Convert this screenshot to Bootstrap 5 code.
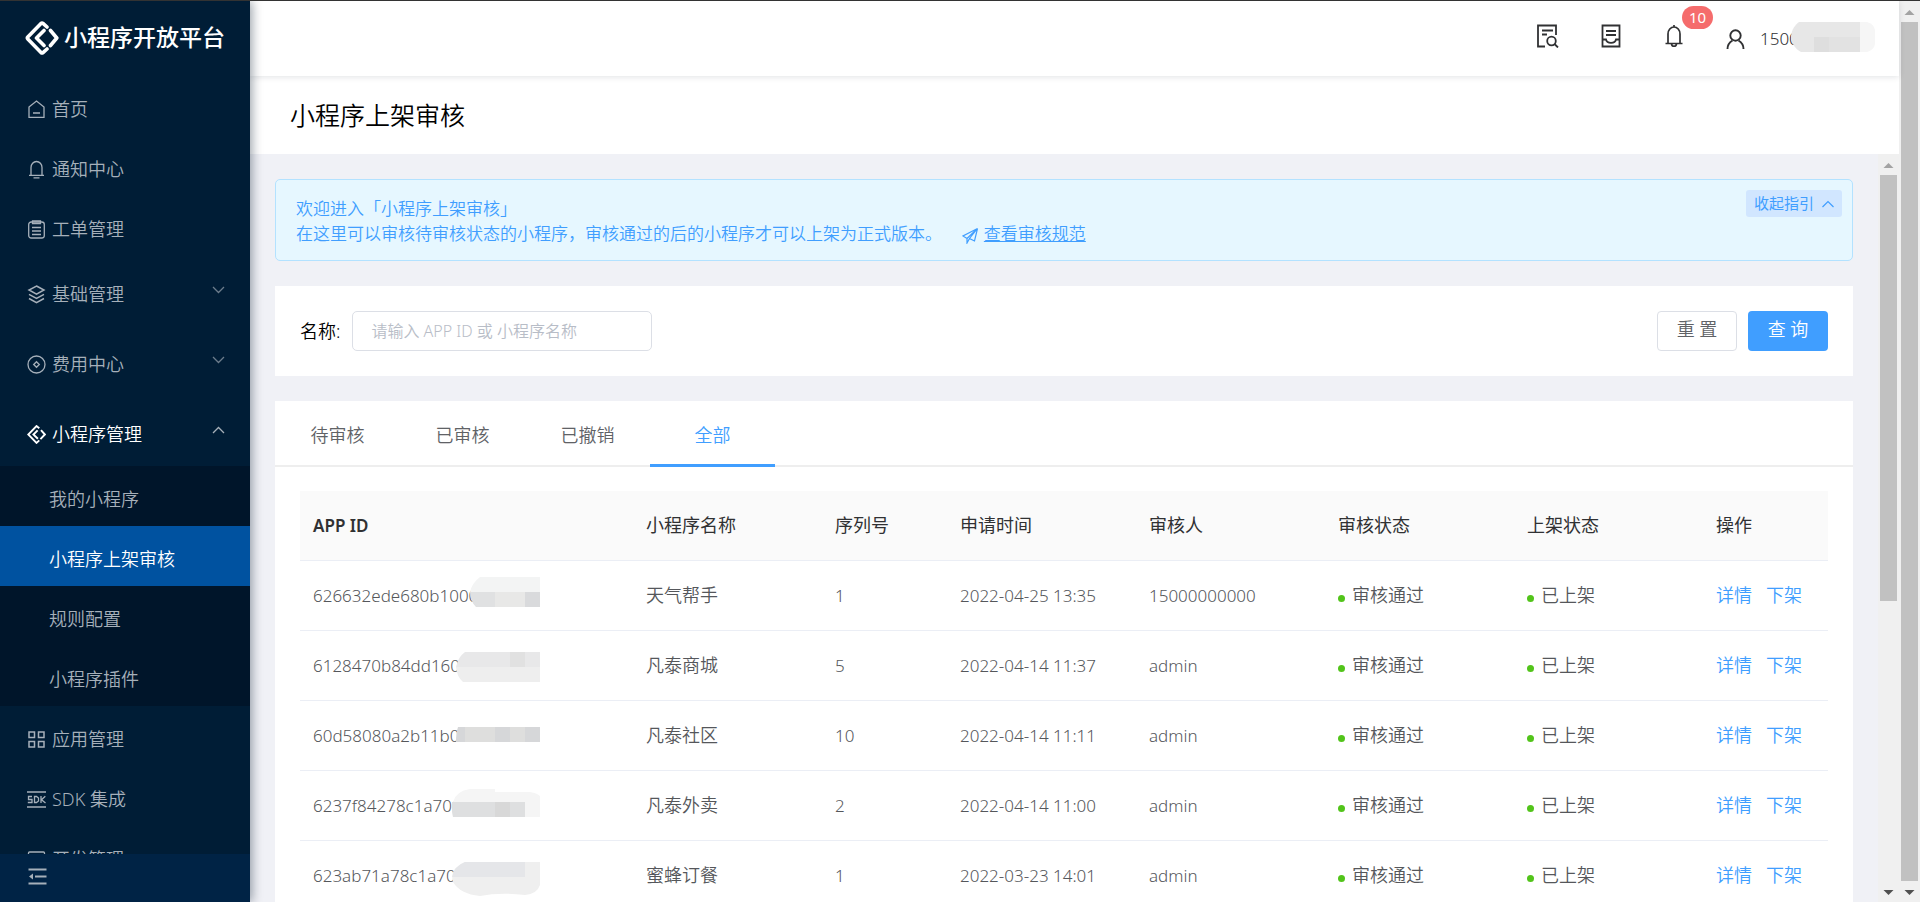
<!DOCTYPE html>
<html lang="zh-CN">
<head>
<meta charset="utf-8">
<meta name="viewport" content="width=device-width, initial-scale=1">
<title>小程序上架审核</title>
<link href="https://cdn.jsdelivr.net/npm/bootstrap@5.3.0/dist/css/bootstrap.min.css" rel="stylesheet">
<style>
:root { --brand: #409eff; --rail: #f0f0f0; }
body { font: 350 17px/25px "Noto Sans", "Noto Sans CJK SC", sans-serif; color: #000; background: #f0f1f6; }
.app { height: 100vh; border-top: 1px solid #333; overflow: hidden; }
a { text-decoration: none; }
svg { flex: none; fill: none; stroke: currentColor; }
.shrinkable { min-width: 0; min-height: 0; }

/* sidebar */
.side { width: 250px; background: #001d36; color: #adb5bd; box-shadow: 2px 0 10px rgba(0,21,41,.4); z-index: 2; }
.brand { height: 78px; padding: 0 0 2px 25px; gap: 5px; color: #fff; font-size: 23px; font-weight: 500; }
.side-nav { overflow: hidden; min-height: 0; font-size: 18px; }
.side-link { height: 60px; padding: 6px 25px 0 27px; gap: 6px; color: #a6b0ba; flex: none; }
.side-link.group { height: 70px; }
.side-link.open { color: #fff; }
.side-link .arrow { margin: 0 0 8px auto; opacity: .65; }
.sub { background: #00152a; }
.sub .side-link { padding-left: 49px; }
.sub .side-link.current { background: #0052a0; color: #fff; }
.collapse-bar { height: 48px; padding: 0 0 3px 28px; background: #002345; border: 0; color: #a6b0ba; flex: none; }

/* header */
.topbar { height: 75px; padding: 0 24px 7px 0; background: #fff; box-shadow: 0 1px 6px rgba(0,21,41,.12); z-index: 1; color: #303133; }
.tool { width: 63px; color: #303133; background: none; border: 0; padding: 0; position: relative; }
.count { position: absolute; left: 40px; top: -16px; width: 31px; height: 23px; border-radius: 12px; background: #f56c6c; color: #fff; font-size: 15px; line-height: 23px; }
.account { gap: 15px; color: #303133; padding: 7px 0 0 21px; }
.account-name { position: relative; width: 115px; }
.account-name svg { position: absolute; left: 31px; top: -4px; stroke: none; }
.page-title { height: 78px; padding-left: 40px; background: #fff; font-size: 25px; font-weight: 350; }

/* content */
.content { padding: 25px 25px 0; gap: 25px; overflow: hidden; }
.guide { border: 1px solid #b3e2ff; border-radius: 5px; background: #e6f7ff; color: var(--brand); padding: 10px 10px 14px 20px; }
.guide-text { padding-top: 6px; }
.guide a { color: var(--brand); text-decoration: underline; }
.guide-toggle { background: #d1e6ff; color: var(--brand); border: 0; border-radius: 3px; height: 27px; padding: 0 8px; font-size: 15px; line-height: 27px; gap: 8px; }
.panel { background: #fff; }
.search { padding: 25px; font-size: 18px; }
.search label { margin-right: 12px; }
.search .form-control { width: 300px; height: 40px; border-color: #dcdfe6; border-radius: 5px; padding: 0 18px; font-size: 16px; font-weight: 350; }
.search .form-control::placeholder { color: #b8bdc7; }
.search .btn { width: 80px; height: 40px; padding: 0 0 3px; border-radius: 4px; font-size: 18px; font-weight: 350; line-height: 25px; }
.btn-reset { border-color: #dcdfe6; color: #606266; }
.search .btn-query { background: var(--brand); color: #fff; margin-left: 11px; }
.tabs { border-bottom: 2px solid #eee; height: 66px; font-size: 18px; }
.tab { width: 125px; height: 66px; border: 0; border-bottom: 3px solid transparent; background: none; color: #606266; padding: 5px 0 0; font-weight: 350; }
.tab.active { color: var(--brand); border-color: var(--brand); }
.list { padding: 24px 25px 0; }
.grid-table { width: 100%; table-layout: fixed; border-collapse: separate; border-spacing: 0; color: #55575b; }
.grid-table th, .grid-table td { height: 70px; padding: 0 0 0 13px; border-bottom: 1px solid #ebeef5; white-space: nowrap; }
.grid-table th { background: #fafafa; color: #303133; font-weight: 400; font-size: 18px; }
.grid-table th.latin { font-weight: 600; font-size: 17px; }
.w-std { width: 189px; } .w-slim { width: 125px; }
.zh { font-size: 18px; }
.masked { position: relative; }
.masked svg { position: absolute; left: 152px; top: 0; stroke: none; }
.dot { width: 7px; height: 7px; border-radius: 50%; background: #52c41a; display: inline-block; margin-right: 7px; }
.grid-table a { color: var(--brand); margin-right: 14px; }
.grid-table a + a { margin: 0; }

/* scroll rails */
.rail { width: 21px; background: var(--rail); padding: 0 2px 0 2px; flex: none; }
.rail .thumb { background: #c1c1c1; width: 17px; }
.rail svg { stroke: none; height: 21px; width: 17px; }
</style>
</head>
<body>
<div class="app d-flex">
  <aside class="side d-flex flex-column flex-shrink-0">
    <div class="brand d-flex align-items-center">
      <svg width="34" height="34" viewBox="0 0 34 34" stroke-width="3.6" stroke-linejoin="round" stroke-linecap="round"><path d="M22 6 18 2.4Q17 1.600 16 2.400L2.800 16Q1.900 17 2.800 18L16 31.600Q17 32.400 18 31.600L22 28M25.500 9.500l6.300 7.500-6.300 7.500M19 9.500 11.500 17l7.500 7.500"/></svg>
      <span>小程序开放平台</span>
    </div>
    <nav class="side-nav d-flex flex-column flex-grow-1">
      <a href="#" class="side-link d-flex align-items-center"><svg width="19" height="19" viewBox="0 0 19 19" stroke-width="1.3"><path d="M2 7 9.500 1 17 7v10.300H2zM6 13h7"/></svg>首页</a>
      <a href="#" class="side-link d-flex align-items-center"><svg width="19" height="19" viewBox="0 0 19 19" stroke-width="1.3"><path d="M4 15V7.500a5.500 6 0 0 1 11 0V15M2 15.300h15M6.500 17.800h6"/></svg>通知中心</a>
      <a href="#" class="side-link d-flex align-items-center"><svg width="19" height="19" viewBox="0 0 19 19" stroke-width="1.3"><rect x="1.700" y="2" width="15.600" height="16" rx="2.500"/><path d="M5.500 1h8v2.500h-8zM5 7.500h9M5 11h9M5 14.500h9"/></svg>工单管理</a>
      <a href="#" class="side-link group d-flex align-items-center"><svg width="19" height="19" viewBox="0 0 19 19" stroke-width="1.5"><path d="m9.500 1 7.500 4-7.500 4.200L2 5zM2 9.300l7.500 4.200L17 9.300M2 13.500l7.500 4.200 7.500-4.200"/></svg>基础管理<svg class="arrow" width="13" height="8" viewBox="0 0 13 8" stroke-width="1.300"><path d="m1 1 5.500 5.500L12 1"/></svg></a>
      <a href="#" class="side-link group d-flex align-items-center"><svg width="19" height="19" viewBox="0 0 19 19" stroke-width="1.3"><circle cx="9.500" cy="9.500" r="8.500"/><path d="m9.500 6.700 2.800 2.800-2.800 2.800-2.800-2.800z"/></svg>费用中心<svg class="arrow" width="13" height="8" viewBox="0 0 13 8" stroke-width="1.300"><path d="m1 1 5.500 5.500L12 1"/></svg></a>
      <a href="#" class="side-link group open d-flex align-items-center"><svg width="19" height="19" viewBox="0 0 34 34" stroke-width="3.4"><path d="M22 6 17 1.900 2.200 17 17 32l5-4.500M25 9l7 8-8 8.400M19 9.500 11.500 17l8 7.500"/></svg>小程序管理<svg class="arrow" width="13" height="8" viewBox="0 0 13 8" stroke-width="1.300"><path d="m1 7 5.500-5.500L12 7"/></svg></a>
      <div class="sub flex-shrink-0">
        <a href="#" class="side-link d-flex align-items-center">我的小程序</a>
        <a href="#" class="side-link current d-flex align-items-center" aria-current="page">小程序上架审核</a>
        <a href="#" class="side-link d-flex align-items-center">规则配置</a>
        <a href="#" class="side-link d-flex align-items-center">小程序插件</a>
      </div>
      <a href="#" class="side-link d-flex align-items-center"><svg width="19" height="19" viewBox="0 0 19 19" stroke-width="1.500"><path d="M2 2h5.500v5.500H2zM11.500 2H17v5.500h-5.500zM2 11.500h5.500V17H2zM11.500 11.500H17V17h-5.500z"/></svg>应用管理</a>
      <a href="#" class="side-link d-flex align-items-center"><svg width="19" height="19" viewBox="0 0 19 19" stroke-width="1.300"><path d="M0 2h19M0 17h19"/><path d="M5 6.500H1.500v3H5v3H.800M7.500 6.500v6h2l2-1.500V8l-2-1.500zM14 6v7M18.300 6.200 14.500 9.700l4 3.300"/></svg>SDK 集成</a>
      <a href="#" class="side-link d-flex align-items-center"><svg width="19" height="19" viewBox="0 0 19 19" stroke-width="1.300"><rect x="1.500" y="2" width="16" height="14" rx="1"/></svg>开发管理</a>
    </nav>
    <button type="button" class="collapse-bar d-flex align-items-center" aria-label="收起菜单"><svg width="19" height="17" viewBox="0 0 19 17" stroke-width="2.200"><path d="M.500 1.500h18M7 8.500h11.500M.500 15.500h18"/><path d="M5 5.500v6l-4-3z" fill="currentColor" stroke="none"/></svg></button>
  </aside>

  <div class="shrinkable d-flex flex-column flex-grow-1">
    <header class="topbar d-flex align-items-center justify-content-end flex-shrink-0">
      <button type="button" class="tool" aria-label="查阅"><svg width="23" height="24" viewBox="0 0 23 24" stroke-width="1.800"><path d="M9 22.500H2V1.500h18V11M6 6.500h11M6 10.500h5"/><circle cx="15.500" cy="17" r="4.300"/><path d="m18.500 20 3.500 3.500"/></svg></button>
      <button type="button" class="tool" aria-label="文档"><svg width="20" height="24" viewBox="0 0 20 24" stroke-width="1.800"><path d="M1.500 1.500h17v21h-17zM5 7h10M5 11h10M1.500 15.500H5c1 4.500 9 4.500 10 0h3.500"/></svg></button>
      <button type="button" class="tool" aria-label="通知"><svg width="20" height="24" viewBox="0 0 20 24" stroke-width="1.700"><path d="M4 19V10a6 7 0 0 1 12 0v9M1.500 19.500h17M10 1v2.500M7.500 20c.500 3 4.500 3 5 0"/></svg><span class="count">10</span></button>
      <a href="#" class="account d-flex align-items-center"><svg width="19" height="20" viewBox="0 0 19 20" stroke-width="1.900"><circle cx="9.500" cy="6.500" r="5.200"/><path d="M1.500 20c0-4 2.500-7 5-8.500M17.500 20c0-4-2.500-7-5-8.500"/></svg>
        <span class="account-name">1500<svg width="84" height="30" viewBox="0 0 84 30"><path fill="#e7e7e7" d="M8 0h62v30H10C3 26 0 20 0 14 1 7 4 3 8 0z"/><path fill="#e2e2e2" d="M23 15h47v15H23z"/><path fill="#dedede" d="M23 15h15v15H23z"/><path fill="#f6f6f6" d="M69 0h7q7 2 8 8v14q-1 6-8 8h-7z"/></svg></span></a>
    </header>
    <h1 class="page-title d-flex align-items-center flex-shrink-0 m-0">小程序上架审核</h1>

    <div class="shrinkable d-flex flex-grow-1">
      <main class="content d-flex flex-column flex-grow-1">
        <section class="guide d-flex justify-content-between align-items-start flex-shrink-0">
          <div class="guide-text">欢迎进入「小程序上架审核」<br>在这里可以审核待审核状态的小程序，审核通过的后的小程序才可以上架为正式版本。 <svg class="ms-3" width="17" height="17" viewBox="0 0 17 17" stroke-width="1.200"><path d="M15.500 1.500 1 9l4 2.500zM15.500 1.500 12.500 14l-5-2.500zM5 11.500V16l2.500-4.500"/></svg> <a href="#">查看审核规范</a></div>
          <button type="button" class="guide-toggle d-flex align-items-center">收起指引<svg width="12" height="8" viewBox="0 0 12 8" stroke-width="1.200"><path d="m.500 7 5.500-5.500L11.500 7"/></svg></button>
        </section>

        <form class="panel search d-flex align-items-center flex-shrink-0">
          <label for="keyword">名称:</label>
          <input id="keyword" type="text" class="form-control" placeholder="请输入 APP ID 或 小程序名称">
          <button type="reset" class="btn btn-reset ms-auto">重 置</button>
          <button type="button" class="btn btn-query">查 询</button>
        </form>

        <section class="panel flex-shrink-0">
          <div class="tabs d-flex" role="tablist">
            <button type="button" class="tab" role="tab">待审核</button>
            <button type="button" class="tab" role="tab">已审核</button>
            <button type="button" class="tab" role="tab">已撤销</button>
            <button type="button" class="tab active" role="tab" aria-selected="true">全部</button>
          </div>
          <div class="list">
            <table class="grid-table">
              <colgroup><col><col class="w-std"><col class="w-slim"><col class="w-std"><col class="w-std"><col class="w-std"><col class="w-std"><col class="w-slim"></colgroup>
              <thead><tr><th class="latin">APP ID</th><th>小程序名称</th><th>序列号</th><th>申请时间</th><th>审核人</th><th>审核状态</th><th>上架状态</th><th>操作</th></tr></thead>
              <tbody>
                <tr><td class="masked">626632ede680b1000<svg width="88" height="70"><path fill="#f3f4f4" d="M28 16h60v15H18q2-9 10-15z"/><path fill="#e0e1e2" d="M18 31h70v15H24q-6-6-6-15z"/><path fill="#e8e8e7" d="M43 31h30v15H43z"/><path fill="#d9dadc" d="M73 31h15v15H73z"/></svg></td><td class="zh">天气帮手</td><td>1</td><td>2022-04-25 13:35</td><td>15000000000</td><td class="zh"><i class="dot"></i>审核通过</td><td class="zh"><i class="dot"></i>已上架</td><td class="zh"><a href="#">详情</a><a href="#">下架</a></td></tr>
                <tr><td class="masked">6128470b84dd160<svg width="88" height="70"><path fill="#e8e8e9" d="M13 21h75v15H4q2-10 9-15z"/><path fill="#e1e1e1" d="M58 21h15v15H58z"/><path fill="#eee" d="M4 36h84v15H11q-6-5-7-15z"/></svg></td><td class="zh">凡泰商城</td><td>5</td><td>2022-04-14 11:37</td><td>admin</td><td class="zh"><i class="dot"></i>审核通过</td><td class="zh"><i class="dot"></i>已上架</td><td class="zh"><a href="#">详情</a><a href="#">下架</a></td></tr>
                <tr><td class="masked">60d58080a2b11b0<svg width="88" height="70"><path fill="#d6d7d9" d="M6 26h82v15H4q0-9 2-15z"/><path fill="#dededd" d="M13 26h30v15H13zM58 26h15v15H58z"/></svg></td><td class="zh">凡泰社区</td><td>10</td><td>2022-04-14 11:11</td><td>admin</td><td class="zh"><i class="dot"></i>审核通过</td><td class="zh"><i class="dot"></i>已上架</td><td class="zh"><a href="#">详情</a><a href="#">下架</a></td></tr>
                <tr><td class="masked">6237f84278c1a700<svg width="88" height="70"><path fill="#f5f5f5" d="M18 18h25v3h35q7 1 10 4v21H1V31Q4 20 18 18z"/><path fill="#dedfe0" d="M0 31h73v15H1q-2-8-1-15z"/><path fill="#d8d8d8" d="M43 31h15v15H43z"/></svg></td><td class="zh">凡泰外卖</td><td>2</td><td>2022-04-14 11:00</td><td>admin</td><td class="zh"><i class="dot"></i>审核通过</td><td class="zh"><i class="dot"></i>已上架</td><td class="zh"><a href="#">详情</a><a href="#">下架</a></td></tr>
                <tr><td class="masked">623ab71a78c1a70<svg width="88" height="70"><path fill="#efefef" d="M13 21h75v23q-3 9-15 10-25-3-45 1Q8 53 1 41-3 28 13 21z"/><path fill="#e5e6e9" d="M13 21h60v15H0q2-11 13-15z"/></svg></td><td class="zh">蜜蜂订餐</td><td>1</td><td>2022-03-23 14:01</td><td>admin</td><td class="zh"><i class="dot"></i>审核通过</td><td class="zh"><i class="dot"></i>已上架</td><td class="zh"><a href="#">详情</a><a href="#">下架</a></td></tr>
              </tbody>
            </table>
          </div>
        </section>
      </main>
      <div class="rail d-flex flex-column" aria-hidden="true">
        <svg viewBox="0 0 17 21"><path fill="#a3a3a3" d="m8.500 9 5 5h-10z"/></svg>
        <div class="thumb" style="height:57%"></div>
        <svg class="mt-auto" viewBox="0 0 17 21"><path fill="#505050" d="m8.500 14 5-5h-10z"/></svg>
      </div>
    </div>
  </div>
  <div class="rail d-flex flex-column" aria-hidden="true">
    <svg viewBox="0 0 17 21"><path fill="#a3a3a3" d="m8.500 9 5 5h-10z"/></svg>
    <div class="thumb flex-grow-1"></div>
    <svg viewBox="0 0 17 21"><path fill="#505050" d="m8.500 14 5-5h-10z"/></svg>
  </div>
</div>
<script src="https://cdn.jsdelivr.net/npm/bootstrap@5.3.0/dist/js/bootstrap.bundle.min.js"></script>
</body>
</html>
